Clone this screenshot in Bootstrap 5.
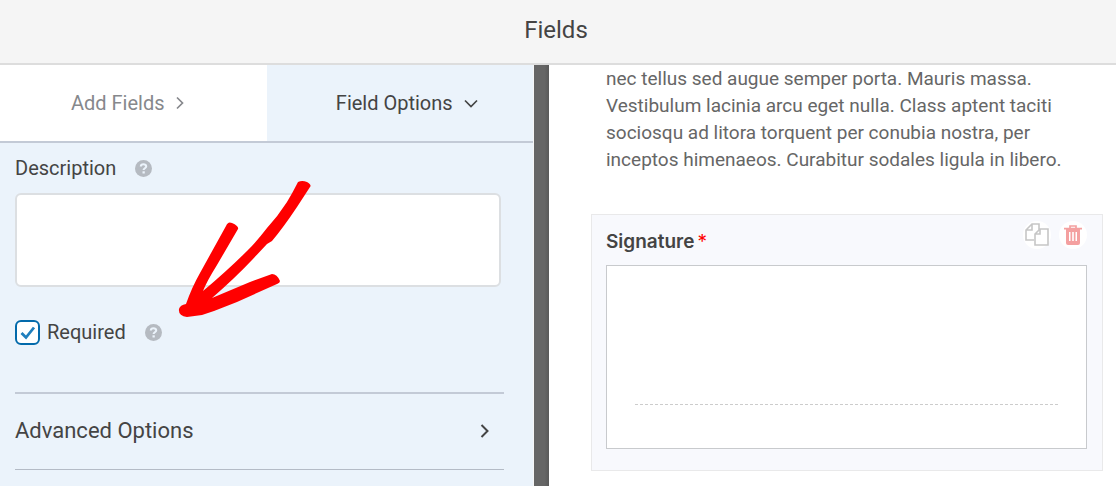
<!DOCTYPE html>
<html lang="en">
<head>
<meta charset="utf-8">
<meta name="viewport" content="width=device-width, initial-scale=1">
<title>Fields</title>
<link href="https://cdn.jsdelivr.net/npm/bootstrap@5.3.0/dist/css/bootstrap.min.css" rel="stylesheet">
<style>
  body { font-family: Roboto, "Liberation Sans", sans-serif; font-size: 20px; line-height: 27px; color: #444; background: #fff; }
  .topbar { height: 65px; padding: 0 4px 4px 0; background: #f5f5f5; border-bottom: 2px solid #ddd; }
  .topbar h1 { font-size: 24px; line-height: 32px; font-weight: 400; }
  .builder { display: grid; grid-template-columns: minmax(0, 534fr) 15px minmax(0, 567fr); }
  .options { background: #ebf3fb; border-right: 1px solid #f6f6f6; }
  .gutter { background: linear-gradient(90deg, #666 70%, #5a5a5a); }
  .tabs { border-bottom: 2px solid #c3cad6; }
  .tab-link { height: 76px; gap: 11px; color: #444; }
  .tab-link.idle { padding-right: 12px; background: #fff; color: #86888c; }
  .tab-link.current { padding-left: 14px; }
  .options-body { padding: 12px 29px 0 15px; }
  .with-help { gap: 19px; }
  .desc-box { height: 94px; margin-top: 11px; border: 2px solid #dcdfe2; border-radius: 6px; resize: none; width: calc(100% - 3px); background: #fff; }
  .required-row { margin: 32px 0 46px; }
  .tick-pair { gap: 7px; }
  .tick.form-check-input { width: 25px; height: 25px; margin: 0; border: 2px solid #036aab; border-radius: 6px; background-color: #fff; }
  .tick.form-check-input:checked { border-color: #036aab; background-color: #fff; background-size: 100% 100%;
    background-image: url("data:image/svg+xml,%3Csvg xmlns='http://www.w3.org/2000/svg' viewBox='0 0 21 21'%3E%3Cpath d='M4.500 11 9 15.500 17 5.500' fill='none' stroke='%23207fbd' stroke-width='2.800'/%3E%3C/svg%3E"); }
  .accordion-link { height: 78px; padding: 0 15px 2px 0; border: 0; border-top: 2px solid #c3cad6; border-bottom: 1px solid #b4bbc6; background: none; font-size: 22px; color: #444; }
  .arrow-mark { left: 178px; top: 115px; pointer-events: none; }
  .preview { padding: 0 13px 15px 42px; }
  .preview p { padding: 0 15px; margin-bottom: 41px; font-size: 19px; color: #666; }
  .field-box { padding: 12px 15px 21px 14px; background: #f8f9fd; border: 1px solid #e9e9ea; }
  .field-name { font-family: Inter, sans-serif; font-size: 19px; font-weight: 600; line-height: 30px; color: #444; }
  .field-name span { margin-left: 3px; color: #f00; font-weight: 400; }
  .tool { width: 28px; height: 28px; background: #fff; }
  .tools { padding: 6px 15px 0 0; }
  .sign-pad { height: 184px; margin-top: 8px; padding: 0 28px 43px; background: #fff; border: 1px solid #c8cacd; }
  .sign-line { border-top: 1px dashed #ccc; }
</style>
</head>
<body class="d-flex flex-column min-vh-100">
<header class="topbar d-flex align-items-center justify-content-center">
  <h1 class="m-0">Fields</h1>
</header>
<main class="builder flex-grow-1">
  <section class="options position-relative">
    <nav class="tabs d-flex">
      <a href="#" class="tab-link idle w-50 d-flex align-items-center justify-content-center text-decoration-none">Add Fields
        <svg width="8" height="14" viewBox="0 0 8 14" fill="none" stroke="currentColor" stroke-width="1.700"><path d="M1 1.500 6.500 7 1 12.500"/></svg></a>
      <a href="#" class="tab-link current w-50 d-flex align-items-center justify-content-center text-decoration-none">Field Options
        <svg width="14" height="9" viewBox="0 0 14 9" fill="none" stroke="currentColor" stroke-width="1.700"><path d="M1 1.500 7 7.500 13 1.500"/></svg></a>
    </nav>
    <div class="options-body">
      <div class="with-help d-flex align-items-center">
        <label for="description">Description</label>
        <svg width="17" height="17" viewBox="0 0 17 17"><circle cx="8.500" cy="8.500" r="8.500" fill="#b5bac1"/><path d="M5.800 6.500C6 3.500 11.300 3.600 11.200 6.500 11.200 8.200 8.600 8.300 8.600 10" fill="none" stroke="#ebf3fb" stroke-width="2.100"/><path d="M7.500 11.300h2.300v2.200H7.500z" fill="#ebf3fb"/></svg>
      </div>
      <textarea id="description" class="desc-box d-block"></textarea>
      <div class="required-row with-help d-flex align-items-center">
        <div class="tick-pair d-flex align-items-center">
          <input class="tick form-check-input" type="checkbox" id="required" checked>
          <label for="required">Required</label>
        </div>
        <svg width="17" height="17" viewBox="0 0 17 17"><circle cx="8.500" cy="8.500" r="8.500" fill="#b5bac1"/><path d="M5.800 6.500C6 3.500 11.300 3.600 11.200 6.500 11.200 8.200 8.600 8.300 8.600 10" fill="none" stroke="#ebf3fb" stroke-width="2.100"/><path d="M7.500 11.300h2.300v2.200H7.500z" fill="#ebf3fb"/></svg>
      </div>
      <button type="button" class="accordion-link w-100 d-flex align-items-center justify-content-between">Advanced Options
        <svg width="9" height="14" viewBox="0 0 9 14" fill="none" stroke="currentColor" stroke-width="2"><path d="M1.500 1 7.500 7 1.500 13"/></svg></button>
    </div>
    <svg class="arrow-mark position-absolute" width="134" height="138" viewBox="0 0 134 138" fill="#f00"><path d="M120 2Q124 0 129 2 134 5 132 7L119 27Q105 48 94 61L89 64 74 80Q57 98 34 118L72 102 94 94Q99 94 102 101 102 103 99 104L59 122 36 131 24 135 9 137Q0 136 1 129 2 125 8 124 14 107 22 93L48 46Q50 41 54 43 61 46 60 49L39 85Q29 101 25 111 50 90 70 70 79 61 89 48 100 36 109 22 115 12 120 2Z"/></svg>
  </section>
  <div class="gutter"></div>
  <section class="preview">
    <p>nec tellus sed augue semper porta. Mauris massa. Vestibulum lacinia arcu eget nulla. Class aptent taciti sociosqu ad litora torquent per conubia nostra, per inceptos himenaeos. Curabitur sodales ligula in libero.</p>
    <div class="field-box position-relative">
      <div class="field-name">Signature<span>*</span></div>
      <div class="tools position-absolute top-0 end-0 d-flex gap-2">
        <button type="button" class="tool border-0 rounded-circle p-0 d-flex align-items-center justify-content-center" aria-label="Duplicate">
          <svg width="24" height="24" viewBox="0 0 24 24" fill="none" stroke="#c6c6c6" stroke-width="1.600"><path d="M9 17H1V7L7 1h7v6M7 1v6H1M15 6h8v16H10V11zM15 6v5h-5"/></svg></button>
        <button type="button" class="tool border-0 rounded-circle p-0 d-flex align-items-center justify-content-center" aria-label="Delete">
          <svg width="18" height="20" viewBox="0 0 18 20"><path d="M6 3V1h6v2M0 3.700h18" fill="none" stroke="#f4a0a0" stroke-width="1.700"/><path fill-rule="evenodd" fill="#f4a0a0" d="M2 4h14v14q0 2-2 2H4q-2 0-2-2zM5 7v9h1.500V7zM8.200 7v9h1.600V7zM11.500 7v9H13V7z"/></svg></button>
      </div>
      <div class="sign-pad d-flex flex-column justify-content-end"><div class="sign-line"></div></div>
    </div>
  </section>
</main>
<script src="https://cdn.jsdelivr.net/npm/bootstrap@5.3.0/dist/js/bootstrap.bundle.min.js"></script>
</body>
</html>
